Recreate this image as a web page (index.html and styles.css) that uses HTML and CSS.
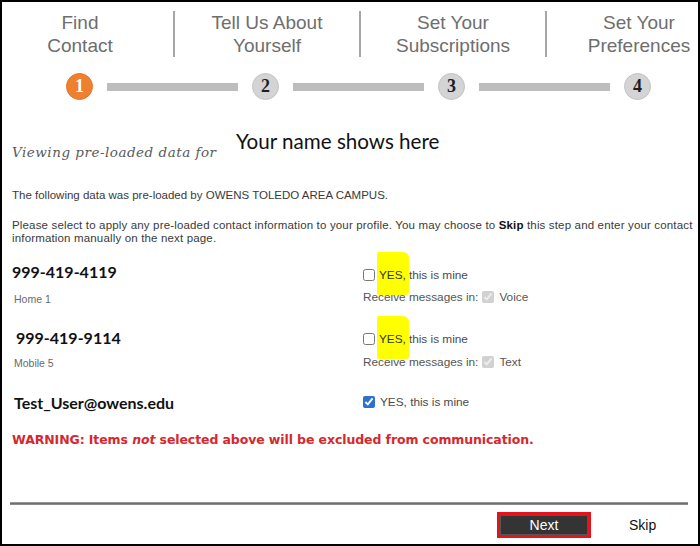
FILE: index.html
```html
<!DOCTYPE html>
<html>
<head>
<meta charset="utf-8">
<link rel="stylesheet" href="styles.css">
</head>
<body>
<div class="frame">
  <div class="steps">
    <div class="step">Find<br>Contact</div>
    <div class="step sep">Tell Us About<br>Yourself</div>
    <div class="step sep">Set Your<br>Subscriptions</div>
    <div class="step sep">Set Your<br>Preferences</div>
  </div>
  <div class="progress">
    <span class="dot active">1</span>
    <span class="bar"></span>
    <span class="dot">2</span>
    <span class="bar"></span>
    <span class="dot">3</span>
    <span class="bar wide"></span>
    <span class="dot">4</span>
  </div>
  <div class="content">
    <div class="viewing">
      <span class="view-label">Viewing pre-loaded data for</span>
      <span class="name">Your name shows here</span>
    </div>
    <p class="info first">The following data was pre-loaded by OWENS TOLEDO AREA CAMPUS.</p>
    <p class="info second">Please select to apply any pre-loaded contact information to your profile. You may choose to <b>Skip</b> this step and enter your contact information manually on the next page.</p>

    <div class="item item1">
      <div class="left">
        <div class="value">999-419-4119</div>
        <div class="type">Home 1</div>
      </div>
      <div class="right">
        <label class="yes"><input type="checkbox" class="cb"><span class="hl">YES,</span> this is mine</label>
        <div class="recv">Receive messages in: <input type="checkbox" class="cb small" checked disabled> Voice</div>
      </div>
    </div>

    <div class="item item2">
      <div class="left">
        <div class="value indent">999-419-9114</div>
        <div class="type">Mobile 5</div>
      </div>
      <div class="right">
        <label class="yes"><input type="checkbox" class="cb"><span class="hl">YES,</span> this is mine</label>
        <div class="recv">Receive messages in: <input type="checkbox" class="cb small" checked disabled> Text</div>
      </div>
    </div>

    <div class="item item3">
      <div class="left">
        <div class="value email">Test_User@owens.edu</div>
      </div>
      <div class="right">
        <label class="yes"><input type="checkbox" class="cb" checked>YES, this is mine</label>
      </div>
    </div>

    <p class="warning">WARNING: Items <i>not</i> selected above will be excluded from communication.</p>
  </div>
  <div class="footer">
    <div class="rule"></div>
    <div class="actions">
      <span class="next-wrap"><button class="next">Next</button></span>
      <button class="skip">Skip</button>
    </div>
  </div>
</div>
</body>
</html>
```
FILE: styles.css
```css
html, body {
  margin: 0;
  padding: 0;
  background: #fff;
}
.frame {
  width: 700px;
  height: 546px;
  box-sizing: border-box;
  border: 2px solid #000;
  overflow: hidden;
  display: flex;
  flex-direction: column;
  font-family: "Liberation Sans", Arial, sans-serif;
}
.steps {
  display: grid;
  grid-template-columns: repeat(4, 186px);
  margin: 9px 0 0 -15px;
  width: 744px;
}
.step {
  text-align: center;
  font-size: 19px;
  line-height: 23px;
  color: #6e6e6e;
}
.step.sep {
  border-left: 2px solid #a6a6a6;
}
.progress {
  display: flex;
  align-items: center;
  gap: 14px;
  margin: 16px 0 0 64px;
}
.dot {
  width: 27px;
  height: 27px;
  border-radius: 50%;
  box-sizing: border-box;
  background: #d4d4d4;
  border: 1px solid #c2c2c2;
  color: #1e1e1e;
  display: flex;
  align-items: center;
  justify-content: center;
  font-family: "Liberation Serif", serif;
  font-weight: bold;
  font-size: 18px;
}
.dot.active {
  background: #ef8030;
  border-color: #e57522;
  color: #fff;
}
.bar {
  width: 131px;
  height: 8px;
  background: #bdbdbd;
}
.content {
  padding-left: 10px;
}
.viewing {
  display: flex;
  align-items: flex-end;
  margin-top: 26px;
  height: 34px;
}
.view-label {
  width: 224px;
  flex: none;
  overflow: hidden;
  white-space: nowrap;
  font-family: "DejaVu Serif", serif;
  font-style: italic;
  font-size: 13.5px;
  letter-spacing: 0.5px;
  color: #5a5a5a;
  line-height: 16px;
}
.name {
  font-family: Lato, "Open Sans", sans-serif;
  font-size: 20.6px;
  color: #111;
  line-height: 26px;
  margin-bottom: 6px;
}
.info {
  margin: 0;
  font-size: 11.5px;
  line-height: 13px;
  color: #3a3a3a;
}
.info.first {
  margin-top: 29px;
}
.info.second {
  margin-top: 17px;
  letter-spacing: 0.16px;
}
.info b {
  color: #111;
}
.item {
  display: grid;
  grid-template-columns: 351px 1fr;
}
.item1 { margin-top: 16.5px; }
.item2 { margin-top: 22.5px; }
.item3 { margin-top: 23px; }
.value {
  font-family: Lato, "Open Sans", sans-serif;
  font-weight: bold;
  font-size: 16px;
  line-height: 20px;
  color: #111;
}
.value.indent { margin-left: 4px; }
.value.email { margin-left: 2px; }
.type {
  margin: 10px 0 0 2px;
  font-size: 10.5px;
  line-height: 14px;
  color: #6a6a6a;
}
.item2 .type {
  margin-top: 8px;
}
.right {
  padding-top: 4px;
  font-size: 11.8px;
  color: #4a4a4a;
}
.item2 .right {
  padding-top: 2px;
}
.item3 .right {
  padding-top: 0;
}
.yes {
  display: flex;
  align-items: center;
  height: 18px;
}
.cb {
  width: 12px;
  height: 12px;
  margin: 0 5px 0 0;
  accent-color: #2f6fd4;
}
.hl {
  position: relative;
  z-index: 0;
  color: #333;
  margin-left: -1px;
  margin-right: 3px;
}
.hl::before {
  content: "";
  position: absolute;
  z-index: -1;
  left: -2px;
  right: -3px;
  top: -16px;
  bottom: -13px;
  background: #ffff00;
  border-radius: 2px 6px 3px 2px;
}
.recv {
  display: flex;
  align-items: center;
  height: 16px;
  margin-top: 5.5px;
  color: #555;
}
.recv .cb.small {
  margin: 0 5px 0 4px;
}
.warning {
  margin: 19px 0 0 0;
  font-family: "DejaVu Sans", Verdana, sans-serif;
  font-weight: bold;
  font-size: 12.5px;
  color: #d6282e;
  letter-spacing: -0.1px;
}
.footer {
  margin-top: auto;
}
.rule {
  margin: 0 10px 0 8px;
  height: 3px;
  background: linear-gradient(#aaa, #6f6f6f, #999);
}
.actions {
  display: flex;
  align-items: center;
  height: 26px;
  margin: 7px 0 6px 0;
  padding-left: 495px;
}
.next-wrap {
  display: flex;
  box-sizing: border-box;
  width: 94px;
  height: 26px;
  border: 3px solid #e2141e;
}
.next {
  flex: 1;
  margin: 0;
  border: 1px solid #555;
  background: #343434;
  color: #fff;
  font-family: "Liberation Sans", Arial, sans-serif;
  font-size: 14px;
  padding: 0;
}
.skip {
  margin-left: 38px;
  border: none;
  background: none;
  padding: 0;
  font-family: "Liberation Sans", Arial, sans-serif;
  font-size: 14px;
  color: #111;
}
```
